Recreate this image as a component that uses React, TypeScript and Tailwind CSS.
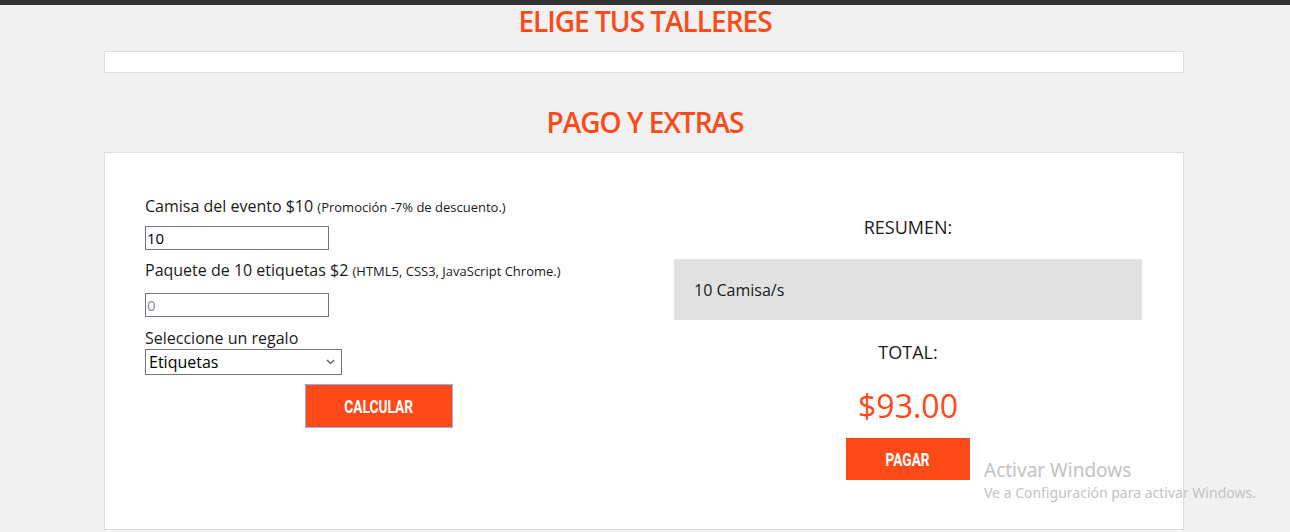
import React from "react";

function BtnLabel({ children }: { children: React.ReactNode }) {
  return (
    <span className="inline-block origin-center scale-x-[0.72] font-['Roboto',sans-serif] text-[19px] font-bold leading-none tracking-[0px]">
      {children}
    </span>
  );
}

export default function App() {
  const orange = "text-[#fe4918]";
  return (
    <div className="relative min-h-[532px] bg-[#f1f1f1] font-['Open_Sans',sans-serif] text-[#1a1a1a]">
      <div className="h-[5px] bg-[#333]" />
      <h2 className={`mt-[0px] text-center text-[28px] leading-[32px] font-semibold ${orange} tracking-[-1px]`}>
        ELIGE TUS TALLERES
      </h2>
      <div className="ml-[104px] mt-[14px] h-[22px] w-[1080px] border border-[#dedede] bg-white" />
      <h2 className={`mt-[33px] text-center text-[28px] leading-[32px] font-semibold ${orange} tracking-[-1px]`}>
        PAGO Y EXTRAS
      </h2>
      <div className="ml-[104px] mt-[14px] h-[378px] w-[1080px] border border-[#dedede] bg-white pl-[40px] pr-[41px]">
        <div className="flex gap-[61px]">
          <div className="w-[468px] pt-[42px]">
            <div className="text-[16px] leading-[22px]">
              Camisa del evento $10 <span className="text-[13px]">(Promoción -7% de descuento.)</span>
            </div>
            <input
              readOnly
              value="10"
              className="mt-[8px] block h-[24px] w-[184px] border border-[#767676] px-[1px] text-[15px] text-black outline-none"
            />
            <div className="mt-[9px] text-[16px] leading-[22px]">
              Paquete de 10 etiquetas $2 <span className="text-[13px]">(HTML5, CSS3, JavaScript Chrome.)</span>
            </div>
            <input
              readOnly
              placeholder="0"
              className="mt-[11px] block h-[24px] w-[184px] border border-[#767676] px-[1px] text-[15px] outline-none placeholder:text-[#8a8aa0]"
            />
            <div className="mt-[10px] text-[16px] leading-[22px]">Seleccione un regalo</div>
            <div className="relative flex h-[26px] w-[197px] items-center border border-[#767676] pl-[3px] text-[16px] text-black">
              Etiquetas
              <svg className="absolute right-[6px] top-[9px]" width="9" height="6" viewBox="0 0 9 6">
                <path d="M1 1l3.5 3.5L8 1" fill="none" stroke="#555" strokeWidth="1.2" />
              </svg>
            </div>
            <div className="mt-[9px] flex justify-center">
              <button className="flex h-[44px] w-[148px] items-center justify-center border border-[#8fb0f0] bg-[#fe4918] text-white">
                <BtnLabel>CALCULAR</BtnLabel>
              </button>
            </div>
          </div>
          <div className="flex w-[468px] flex-col items-center pt-[61px]">
            <div className="text-[18px] leading-[26px]">RESUMEN:</div>
            <div className="mt-[19px] flex h-[61px] w-full items-center bg-[#e1e1e1] px-[20px] text-[16px]">
              10 Camisa/s
            </div>
            <div className="mt-[19px] text-[18px] leading-[26px]">TOTAL:</div>
            <div className={`mt-[21px] text-[32px] leading-[40px] ${orange}`}>$93.00</div>
            <button className="mt-[12px] flex h-[42px] w-[124px] items-center justify-center bg-[#fe4918] text-white">
              <BtnLabel>PAGAR</BtnLabel>
            </button>
          </div>
        </div>
      </div>
      <div className="pointer-events-none absolute left-[984px] top-[457px] text-[#c3c3c3] font-['Noto_Sans',sans-serif]">
        <div className="text-[19px] leading-[26px]">Activar Windows</div>
        <div className="text-[14px] leading-[20px]">Ve a Configuración para activar Windows.</div>
      </div>
    </div>
  );
}
